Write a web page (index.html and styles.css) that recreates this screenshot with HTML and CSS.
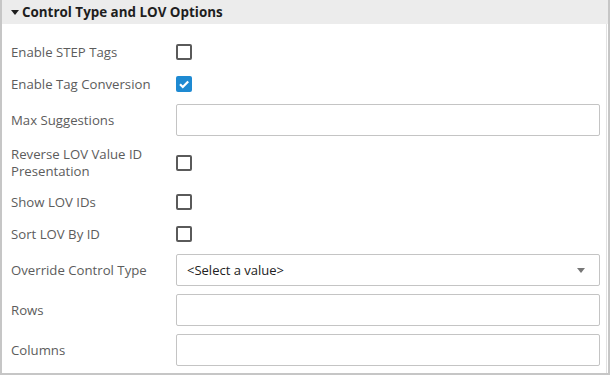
FILE: index.html
```html
<!DOCTYPE html>
<html lang="en">
<head>
  <meta charset="UTF-8" />
  <title>Control Type and LOV Options</title>
  <link rel="stylesheet" href="styles.css">
</head>
<body>
  <div class="panel">
    <div class="panel-header">
      <span class="caret"></span>Control Type and LOV Options
    </div>
    <div class="panel-body">
      <div class="row">
        <label class="row-label">Enable STEP Tags</label>
        <span class="check"></span>
      </div>
      <div class="row">
        <label class="row-label">Enable Tag Conversion</label>
        <span class="check checked">
          <svg viewBox="0 0 16 16" width="16" height="16"><path d="M4 8.2 L6.8 11 L12.2 5.4" fill="none" stroke="#fff" stroke-width="2.2"/></svg>
        </span>
      </div>
      <div class="row">
        <label class="row-label">Max Suggestions</label>
        <input class="field" type="text">
      </div>
      <div class="row row-tall">
        <label class="row-label">Reverse LOV Value ID<br>Presentation</label>
        <span class="check"></span>
      </div>
      <div class="row">
        <label class="row-label">Show LOV IDs</label>
        <span class="check"></span>
      </div>
      <div class="row">
        <label class="row-label">Sort LOV By ID</label>
        <span class="check"></span>
      </div>
      <div class="row">
        <label class="row-label">Override Control Type</label>
        <div class="field select">
          <span>&lt;Select a value&gt;</span>
          <span class="select-arrow"></span>
        </div>
      </div>
      <div class="row">
        <label class="row-label">Rows</label>
        <input class="field" type="text">
      </div>
      <div class="row">
        <label class="row-label">Columns</label>
        <input class="field" type="text">
      </div>
    </div>
  </div>
</body>
</html>
```

FILE: styles.css
```css
body {
  margin: 0;
  font-family: 'Open Sans', 'Noto Sans', sans-serif;
  font-size: 13px;
  background: #ffffff;
}

.panel {
  width: 606px;
  height: 373px;
  border: 2px solid #c6c6c6;
  border-top: none;
  display: flex;
  flex-direction: column;
}

.panel-header {
  height: 24px;
  background-color: #ececec;
  display: flex;
  align-items: center;
  padding-left: 9px;
  font-weight: bold;
  font-size: 13.4px;
  color: #1e1e1e;
}

.caret {
  width: 0;
  height: 0;
  border-left: 4.5px solid transparent;
  border-right: 4.5px solid transparent;
  border-top: 5px solid #1e1e1e;
  margin-right: 3px;
}

.panel-body {
  flex: 1;
  padding: 12px 0 0 9px;
  border-right: 1px solid #e2e2e2;
  margin-right: 1px;
}

.row {
  display: flex;
  align-items: center;
  min-height: 32px;
}

.row:has(.field) {
  min-height: 40px;
}

.row-tall {
  min-height: 46px;
  line-height: 17px;
}

.row-label {
  width: 165px;
  font-size: 13.2px;
  color: #5c5c5c;
}

.check {
  width: 12px;
  height: 12px;
  border: 2px solid #5a5a5a;
  border-radius: 2px;
  display: flex;
}

.check.checked {
  width: 16px;
  height: 16px;
  border: none;
  background-color: #1e8ad2;
}

.field {
  box-sizing: border-box;
  width: 424px;
  height: 32px;
  border: 1px solid #c4c4c4;
  border-radius: 2px;
  font-family: inherit;
  font-size: 13px;
  outline: none;
}

.select {
  display: flex;
  align-items: center;
  justify-content: space-between;
  padding: 0 14px 0 10px;
  color: #222222;
}

.select-arrow {
  width: 0;
  height: 0;
  border-left: 4.5px solid transparent;
  border-right: 4.5px solid transparent;
  border-top: 5px solid #777777;
}
```
